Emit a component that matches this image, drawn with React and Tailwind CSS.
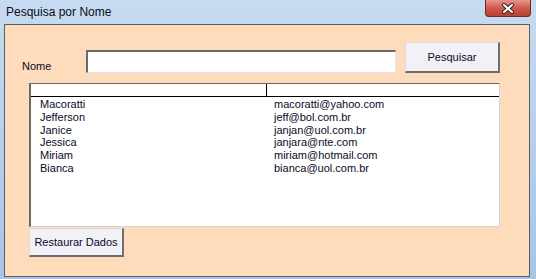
const contatos = [
  { nome: 'Macoratti', email: 'macoratti@yahoo.com' },
  { nome: 'Jefferson', email: 'jeff@bol.com.br' },
  { nome: 'Janice', email: 'janjan@uol.com.br' },
  { nome: 'Jessica', email: 'janjara@nte.com' },
  { nome: 'Miriam', email: 'miriam@hotmail.com' },
  { nome: 'Bianca', email: 'bianca@uol.com.br' },
];

function CloseButton() {
  return (
    <div className="mr-[5px] w-[46px] h-[17px] rounded-b-[4px] border border-t-0 border-[#6b2a22] bg-gradient-to-b from-[#e6968c] via-[#cf5a4a] to-[#b8402f] flex items-center justify-center">
      <svg width="14" height="11" viewBox="0 0 14 11">
        <path d="M3 2 L11 9 M11 2 L3 9" stroke="#3a2a2a" strokeWidth="4" strokeLinecap="round" />
        <path d="M3 2 L11 9 M11 2 L3 9" stroke="#ffffff" strokeWidth="2" strokeLinecap="round" />
      </svg>
    </div>
  );
}

function WinButton({ children, className = '' }) {
  return (
    <button className={`bg-[#f2f1f8] border-t border-l border-[#dcdcdc] border-r-2 border-b-2 border-r-[#6e6e6e] border-b-[#6e6e6e] text-[11px] text-[#0a0a28] ${className}`}>
      {children}
    </button>
  );
}

export default function App() {
  return (
    <div className="w-[536px] h-[279px] bg-gradient-to-b from-[#c6dbf1] to-[#a7c5e5] flex flex-col font-['Liberation_Sans',Arial,sans-serif] overflow-hidden">
      {/* barra de título */}
      <div className="h-[24px] flex items-start justify-between shrink-0">
        <span className="pl-[6px] pt-[5px] text-[12px] leading-[14px] text-[#0b0b1e]">Pesquisa por Nome</span>
        <CloseButton />
      </div>

      {/* área do formulário */}
      <div className="ml-[4px] w-[526px] h-[253px] border border-[#56606c] bg-[#fedcbb] shrink-0">
        <div className="flex items-end pt-[17px] pl-[17px]">
          <span className="w-[64px] text-[11px] leading-[13px] text-[#0a0a28]">Nome</span>
          <input
            type="text"
            className="w-[310px] h-[23px] bg-white border-t-2 border-l-2 border-t-[#6a6a6a] border-l-[#6a6a6a] border-b border-r border-b-[#e6e6e6] border-r-[#e6e6e6] outline-none"
          />
          <WinButton className="ml-[9px] w-[95px] h-[31px]">Pesquisar</WinButton>
        </div>

        <div className="ml-[24px] mt-[10px] w-[471px] h-[144px] bg-white border-t border-l-2 border-t-[#6a6a6a] border-l-[#6a6a6a] border-b border-r border-b-[#d4d4d4] border-r-[#d4d4d4]">
          <div className="grid grid-cols-[236px_1fr] h-[13px] border-b border-black">
            <div className="border-r border-black" />
            <div />
          </div>
          <div className="pt-[1px]">
            {contatos.map((c) => (
              <div key={c.nome} className="grid grid-cols-[236px_1fr] text-[11px] leading-[12.8px] text-[#0a0a28]">
                <span className="pl-[9px]">{c.nome}</span>
                <span className="pl-[7px]">{c.email}</span>
              </div>
            ))}
          </div>
        </div>

        <WinButton className="ml-[24px] mt-[1px] w-[95px] h-[29px]">Restaurar Dados</WinButton>
      </div>
    </div>
  );
}
